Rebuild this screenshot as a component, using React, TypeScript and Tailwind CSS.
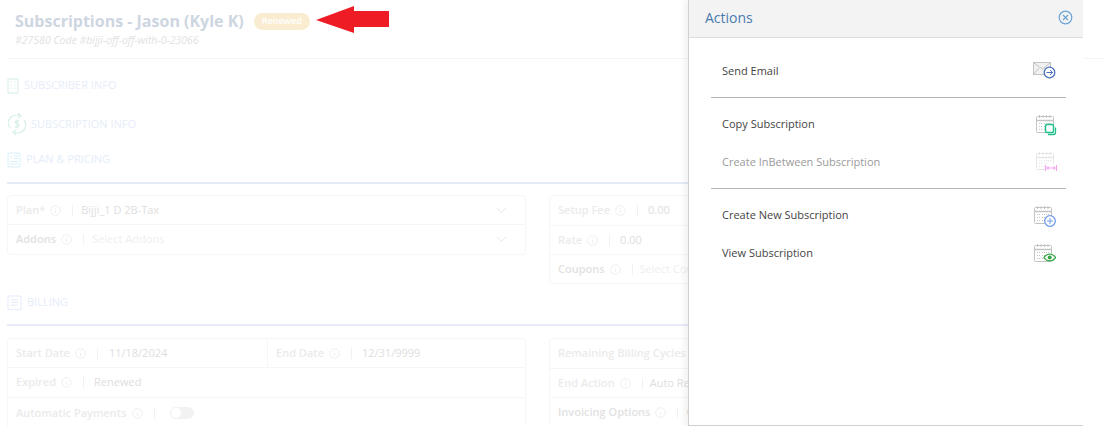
import { ReactNode } from "react";

function Info() {
  return (
    <svg width="11" height="11" viewBox="0 0 11 11" fill="none" stroke="#eeeeee" className="shrink-0">
      <circle cx="5.5" cy="5.5" r="4.8" />
      <path d="M5.5 5v3M5.5 3v1" />
    </svg>
  );
}

function Field({ label, value, bold, muted, gap = "ml-[8px]" }: { label: string; value?: ReactNode; bold?: boolean; muted?: boolean; gap?: string }) {
  return (
    <div className="flex items-center h-full pl-[8px] whitespace-nowrap">
      <span className={`text-[11px] font-semibold ${bold ? "text-[#e2e2e2]" : "text-[#ebebeb]"}`}>{label}</span>
      <span className="ml-[5px]"><Info /></span>
      <span className="ml-[11px] h-[11px] w-px bg-[#f1f1f1]" />
      <span className={`text-[11px] ${gap} ${muted ? "text-[#efefef]" : "text-[#dedede]"}`}>{value}</span>
    </div>
  );
}

function Chevron() {
  return (
    <svg width="11" height="7" viewBox="0 0 11 7" fill="none" stroke="#e6e6e6" strokeWidth="1" className="mr-[18px]">
      <path d="M1 1l4.5 4.5L10 1" />
    </svg>
  );
}

function SectionHead({ icon, label, className }: { icon: ReactNode; label: string; className?: string }) {
  return (
    <div className={`flex items-center text-[11px] text-[#e6edfa] ${className ?? ""}`}>
      {icon}
      <span>{label}</span>
    </div>
  );
}

function Calendar({ children, faded, className }: { children: ReactNode; faded?: boolean; className?: string }) {
  const c = faded ? "#e6e6e6" : "#c4c4c4";
  return (
    <svg width="24" height="24" viewBox="0 0 24 24" fill="none" className={className}>
      <rect x="2.500" y="4.500" width="17" height="16" rx="1" stroke={c} />
      <path d="M2.500 8.500h17" stroke={c} strokeWidth="1.500" />
      <path d="M5.500 3v3M9 3v3M12.500 3v3M16 3v3" stroke={c} />
      <path d="M5 11.500h3M10 11.500h3M14 11.500h3M5 14.500h3M10 14.500h3M5 17.500h3M10 17.500h3" stroke={c} strokeDasharray="1 1" />
      {children}
    </svg>
  );
}

function ActionRow({ label, icon, disabled, className }: { label: string; icon: ReactNode; disabled?: boolean; className?: string }) {
  return (
    <div className={`flex items-center justify-between h-[22px] pl-[33px] pr-[25px] text-[11px] ${disabled ? "text-[#9a9a9a]" : "text-[#444444]"} ${className ?? ""}`}>
      <span>{label}</span>
      <span className="flex justify-end">{icon}</span>
    </div>
  );
}

export default function App() {
  return (
    <div className="relative h-[426px] w-[1111px] overflow-hidden bg-white font-['Open_Sans',sans-serif]">
      {/* faded page behind the panel */}
      <div className="px-[7px]">
        <div className="h-[59px] border-b border-[#f5f5f5] pl-[8px] pt-[11px]">
          <div className="flex items-center h-[20px]">
            <span className="text-[16px] font-bold text-[#cdd6e1] leading-[20px]">Subscriptions - Jason (Kyle K)</span>
            <span className="ml-[10px] flex h-[17px] w-[56px] items-center justify-center rounded-full bg-[#f9ecd0] text-[9px] font-semibold text-white">Renewed</span>
          </div>
          <div className="mt-[1px] text-[10.5px] italic leading-[16px] text-[#e2e2e2]">#27580 Code #bijji-off-off-with-0-23066</div>
        </div>

        <SectionHead
          className="mt-[18px] h-[17px]"
          label="SUBSCRIBER INFO"
          icon={
            <svg width="12" height="16" viewBox="0 0 12 16" fill="none" stroke="#d5f0e4" className="mr-[5px]">
              <rect x="1" y="1" width="10" height="14" />
              <path d="M3.500 4h1.500M7 4h1.500M3.500 7h1.500M7 7h1.500M3.500 10h1.500M7 10h1.500" />
            </svg>
          }
        />
        <SectionHead
          className="mt-[18px] h-[24px]"
          label="SUBSCRIPTION INFO"
          icon={
            <svg width="20" height="24" viewBox="0 0 20 24" fill="none" stroke="#d9efe8" strokeWidth="1.300" className="mr-[4px]">
              <path d="M3 16a8 8 0 0 1 10-12M17 8a8 8 0 0 1-10 12" />
              <path d="M11 1l3 3-3 2M9 23l-3-3 3-2" />
              <path d="M12 9.500c-1-1-4-1-4 .7s4 1.300 4 3.300-3 1.700-4 .7M10 7.500v9" />
            </svg>
          }
        />
        <SectionHead
          className="mt-[15px] h-[17px]"
          label="PLAN & PRICING"
          icon={
            <svg width="14" height="16" viewBox="0 0 14 16" fill="none" stroke="#d6f0fa" className="mr-[5px]">
              <rect x="1" y="1" width="12" height="14" rx="1" />
              <path d="M3 5h2M7 4h4M7 6.500h4M3 9.500h8M3 12h8" />
            </svg>
          }
        />
        <div className="mt-[14px] h-[2px] w-[682px] bg-[#e2ebf7]" />

        <div className="mt-[11px] flex w-[1100px]">
          <div className="w-[519px]">
            <div className="flex h-[30px] items-center justify-between rounded-t border border-[#f6f6f6]">
              <Field label="Plan*" value="Bijji_1 D 2B-Tax" />
              <Chevron />
            </div>
            <div className="flex h-[30px] items-center justify-between rounded-b border border-t-0 border-[#f6f6f6]">
              <Field label="Addons" value="Select Addons" muted bold />
              <Chevron />
            </div>
          </div>
          <div className="ml-[23px] w-[300px] rounded border border-[#f6f6f6]">
            <div className="h-[30px] border-b border-[#f6f6f6]"><Field label="Setup Fee" value="0.00" gap="ml-[10px]" /></div>
            <div className="h-[29px] border-b border-[#f6f6f6]"><Field label="Rate" value="0.00" gap="ml-[10px]" /></div>
            <div className="h-[28px]"><Field label="Coupons" value="Select Coupons" muted bold gap="ml-[7px]" /></div>
          </div>
        </div>

        <SectionHead
          className="mt-[10px] h-[17px]"
          label="BILLING"
          icon={
            <svg width="15" height="16" viewBox="0 0 15 16" fill="none" stroke="#e3eafa" className="mr-[5px]">
              <path d="M1 1h13v14l-2-.8-2 .8-2.500-.8L5 15l-2-.8-2 .8z" />
              <path d="M4 5h7M4 7.500h7M4 10h7" />
            </svg>
          }
        />
        <div className="mt-[13px] h-[2px] w-[682px] bg-[#e6ebf7]" />

        <div className="mt-[12px] flex w-[1100px]">
          <div className="w-[519px]">
            <div className="flex h-[30px] rounded-t border border-[#f6f6f6]">
              <div className="w-[260px] border-r border-[#f6f6f6]"><Field label="Start Date" value="11/18/2024" gap="ml-[11px]" /></div>
              <Field label="End Date" value="12/31/9999" gap="ml-[10px]" />
            </div>
            <div className="h-[30px] border-x border-b border-[#f6f6f6]"><Field label="Expired" value="Renewed" gap="ml-[10px]" /></div>
            <div className="flex h-[30px] items-center border-x border-[#f6f6f6] pl-[8px]">
              <span className="text-[11px] font-semibold text-[#ebebeb]">Automatic Payments</span>
              <span className="ml-[5px]"><Info /></span>
              <span className="ml-[11px] h-[11px] w-px bg-[#f1f1f1]" />
              <span className="relative ml-[15px] h-[12px] w-[24px] rounded-full bg-[#f2f2f2]">
                <span className="absolute left-0 top-0 h-[12px] w-[12px] rounded-full border border-[#f2f2f2] bg-white" />
              </span>
            </div>
          </div>
          <div className="ml-[23px] w-[300px] rounded-t border border-[#f6f6f6]">
            <div className="h-[30px] border-b border-[#f6f6f6]"><Field label="Remaining Billing Cycles" value="" /></div>
            <div className="h-[29px] border-b border-[#f6f6f6]"><Field label="End Action" value="Auto Renew" gap="ml-[7px]" /></div>
            <div className="h-[28px]"><Field label="Invoicing Options" value="Consolidated" bold /></div>
          </div>
        </div>
      </div>

      {/* red annotation arrow */}
      <svg width="74" height="28" viewBox="0 0 74 28" className="absolute left-[316px] top-[6px]">
        <path d="M0 14 L38 0 L38 5 L73 5 L73 21 L38 21 L38 27 Z" fill="#ee1c25" />
      </svg>

      {/* actions panel */}
      <div className="absolute left-[688px] top-0 h-[426px] w-[395px] border-b border-l border-[#d0d0d0] bg-white shadow-[-4px_0_6px_rgba(0,0,0,0.05)]">
        <div className="flex h-[38px] items-center justify-between border-b border-[#dddddd] bg-[#f3f3f3] pb-[2px] pl-[16px] pr-[10px]">
          <span className="text-[14px] text-[#4a7bb0]">Actions</span>
          <svg width="15" height="15" viewBox="0 0 15 15" fill="none" stroke="#6aa3d8" strokeWidth="1.200">
            <circle cx="7.500" cy="7.500" r="6.300" />
            <path d="M5 5l5 5M10 5l-5 5" />
          </svg>
        </div>
        <div className="pt-[22px]">
          <ActionRow
            label="Send Email"
            icon={
              <svg width="24" height="18" viewBox="0 0 24 18" fill="none" className="mr-[2px]">
                <rect x="1.500" y="0.500" width="17" height="12" fill="#f1f1f1" stroke="#c4c4c4" />
                <path d="M2 1l8.500 6L18 1M2 12l5-6M18 12l-4-5" stroke="#c4c4c4" />
                <circle cx="17.500" cy="10.500" r="5.300" fill="white" stroke="#4a72c0" strokeWidth="1.300" />
                <path d="M14.500 10.500h6M18 8l2.500 2.500L18 13" stroke="#4a72c0" />
              </svg>
            }
          />
          <div className="ml-[22px] mt-[15px] h-px w-[355px] bg-[#b5b5b5]" />
          <ActionRow
            className="mt-[15px]"
            label="Copy Subscription"
            icon={
              <Calendar>
                <rect x="11.500" y="12.500" width="8" height="8" rx="1.500" fill="white" stroke="#22c08a" strokeWidth="1.500" />
                <path d="M14 22.500h5.500a2 2 0 0 0 2-2v-5" stroke="#22c08a" strokeWidth="1.300" />
              </Calendar>
            }
          />
          <ActionRow
            className="mt-[16px]"
            label="Create InBetween Subscription"
            disabled
            icon={
              <Calendar faded className="-translate-y-px">
                <rect x="11" y="15" width="12" height="7" fill="white" />
                <path d="M11.500 16v6M22.500 16v6M13 19h8M14.500 17.500L13 19l1.500 1.500M19.500 17.500L21 19l-1.500 1.500" stroke="#f5a8f0" strokeWidth="1.200" />
              </Calendar>
            }
          />
          <div className="ml-[22px] mt-[15px] h-px w-[355px] bg-[#b5b5b5]" />
          <ActionRow
            className="mt-[15px]"
            label="Create New Subscription"
            icon={
              <Calendar className="mr-[2px]">
                <circle cx="18" cy="18" r="5.300" fill="white" stroke="#6f9be8" strokeWidth="1.300" />
                <path d="M15 18h6M18 15v6" stroke="#6f9be8" />
              </Calendar>
            }
          />
          <ActionRow
            className="mt-[16px]"
            label="View Subscription"
            icon={
              <Calendar className="mr-[2px]">
                <path d="M12 16.500c2.500-4.500 9-4.500 11.500 0-2.500 4.500-9 4.500-11.500 0z" fill="white" stroke="#35a845" strokeWidth="1.300" />
                <circle cx="17.700" cy="16.500" r="2" fill="#35a845" />
              </Calendar>
            }
          />
        </div>
      </div>
    </div>
  );
}
